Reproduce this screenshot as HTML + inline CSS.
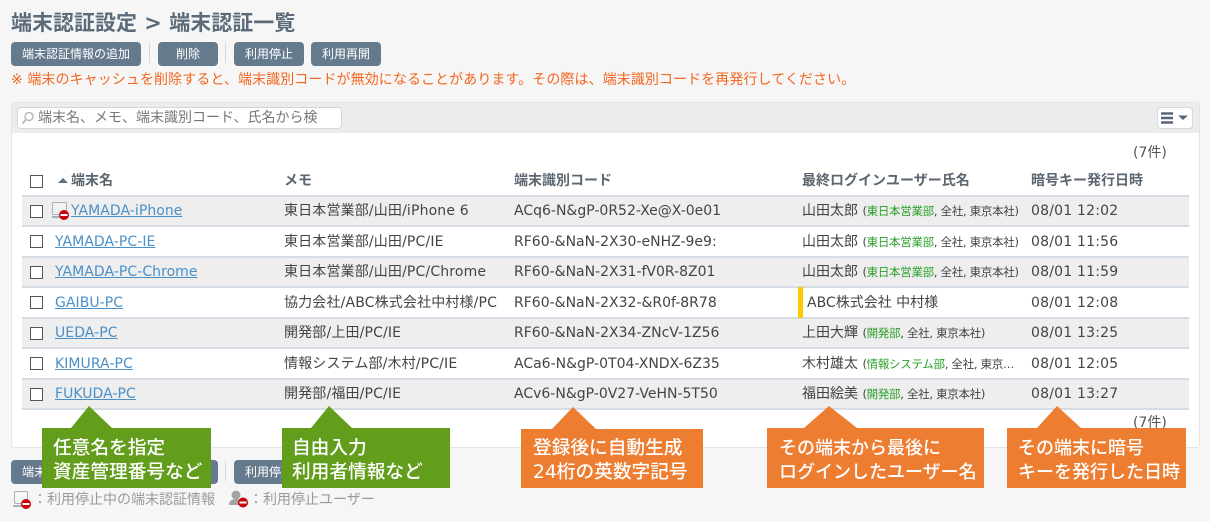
<!DOCTYPE html>
<html lang="ja"><head><meta charset="utf-8">
<style>
html,body{margin:0;padding:0}
body{width:1210px;height:522px;position:relative;overflow:hidden;background:#f6f6f6;font-family:"DejaVu Sans","Noto Sans CJK JP",sans-serif;color:#444}
.a{position:absolute;white-space:nowrap}
.btn{position:absolute;height:24px;top:42px;background:#667a8e;color:#fff;border-radius:4px;font-size:12px;line-height:24px;text-align:center;white-space:nowrap;overflow:hidden}
.sep{position:absolute;width:1px;height:20px;background:#d3d6d9}
.row{position:absolute;left:22px;width:1167px;height:28px}
.g{background:#eeeeee}
.line{position:absolute;left:22px;width:1167px;height:2px;background:#d5dce3}
.cb{position:absolute;left:30px;width:11px;height:11px;border:1px solid #555;background:#fff}
.t{position:absolute;font-size:14px;white-space:nowrap;line-height:20px;color:#444}
.l{color:#4a90c8;text-decoration:underline;letter-spacing:.05px}
.c{letter-spacing:0}
.d{letter-spacing:.2px}
.m{letter-spacing:.15px}
.th{position:absolute;top:171px;font-size:14px;font-weight:bold;color:#5b6670;white-space:nowrap;line-height:20px}
.s{font-size:11.500px;letter-spacing:-.3px}
.s b{font-weight:normal;color:#2aa02a}
.box{position:absolute;color:#fff;font-size:18px;line-height:24px;font-weight:500;white-space:nowrap}
.big{font-size:18.700px}
.green{background:#629d1c}.orange{background:#ed7d31}
svg{position:absolute;overflow:visible}
</style></head><body>

<div class="a" style="left:11px;top:10px;font-size:21px;line-height:26px;font-weight:bold;color:#5c6b79">端末認証設定 &gt; 端末認証一覧</div>

<div class="btn" style="left:11px;width:130px">端末認証情報の追加</div>
<div class="sep" style="left:149px;top:43px"></div>
<div class="btn" style="left:158px;width:60px">削除</div>
<div class="sep" style="left:225px;top:43px"></div>
<div class="btn" style="left:234px;width:70px">利用停止</div>
<div class="btn" style="left:311px;width:70px">利用再開</div>

<div class="a" style="left:11px;top:70px;font-size:14px;line-height:20px;color:#f4651f;letter-spacing:.08px">※ 端末のキャッシュを削除すると、端末識別コードが無効になることがあります。その際は、端末識別コードを再発行してください。</div>

<!-- panel -->
<div class="a" style="left:11px;top:102px;width:1187px;height:344px;background:#fff;border:1px solid #e2e4e6;border-radius:3px"></div>
<div class="a" style="left:12px;top:103px;width:1187px;height:30px;background:#ececec"></div>
<div class="a" style="left:17px;top:107px;width:323px;height:20px;background:#fff;border:1px solid #d3d6d9;border-radius:4px"></div>
<svg style="left:21px;top:111px" width="14" height="14" viewBox="0 0 14 14"><circle cx="8" cy="5.500" r="4" fill="none" stroke="#bbb" stroke-width="1.500"/><path d="M5 8.500 L1.500 12.500" stroke="#bbb" stroke-width="2"/></svg>
<div class="a" style="left:38px;top:108px;font-size:14px;line-height:20px;color:#777">端末名、メモ、端末識別コード、氏名から検</div>
<div class="a" style="left:1157px;top:107px;width:34px;height:20px;background:#fff;border:1px solid #d3d9e0;border-radius:4px"></div>
<svg style="left:1161px;top:112px" width="28" height="12" viewBox="0 0 28 12"><path d="M0 1.500H12M0 6H12M0 10.500H12" stroke="#56677a" stroke-width="2.400"/><path d="M17 3.500H27L22 8Z" fill="#56677a"/></svg>

<div class="t" style="left:1133px;top:143px;color:#555">(7件)</div>

<!-- header -->
<div class="cb" style="top:175px"></div>
<svg style="left:58px;top:178px" width="10" height="6"><path d="M0 5L5 0L10 5Z" fill="#5f7080"/></svg>
<div class="th" style="left:71px">端末名</div>
<div class="th" style="left:284px">メモ</div>
<div class="th" style="left:514px">端末識別コード</div>
<div class="th" style="left:802px">最終ログインユーザー氏名</div>
<div class="th" style="left:1031px">暗号キー発行日時</div>

<!-- rows -->
<div class="row g" style="top:197px;height:29px"></div>
<div class="row g" style="top:258px;height:29px"></div>
<div class="row g" style="top:319px;height:29px"></div>
<div class="row g" style="top:380px;height:28px"></div>
<div class="line" style="top:195px"></div>
<div class="line" style="top:225px"></div>
<div class="line" style="top:256px"></div>
<div class="line" style="top:286px"></div>
<div class="line" style="top:317px"></div>
<div class="line" style="top:347px"></div>
<div class="line" style="top:378px"></div>
<div class="line" style="top:408px"></div>

<div class="cb" style="top:205px"></div>
<div class="cb" style="top:235px"></div>
<div class="cb" style="top:266px"></div>
<div class="cb" style="top:296px"></div>
<div class="cb" style="top:327px"></div>
<div class="cb" style="top:357px"></div>
<div class="cb" style="top:388px"></div>

<svg style="left:51px;top:202px" width="20" height="18" viewBox="0 0 20 18"><rect x="1.500" y="0.500" width="14" height="12" rx="1" fill="#f2f2f2" stroke="#a9b0b6"/><path d="M1 14H14V16H1Z" fill="#a9b0b6"/><circle cx="13" cy="13" r="5" fill="#c8000a"/><rect x="9.500" y="12" width="7" height="2" fill="#fff"/></svg>

<div class="t l" style="left:71px;top:201px">YAMADA-iPhone</div>
<div class="t l" style="left:55px;top:232px">YAMADA-PC-IE</div>
<div class="t l" style="left:55px;top:262px">YAMADA-PC-Chrome</div>
<div class="t l" style="left:55px;top:293px">GAIBU-PC</div>
<div class="t l" style="left:55px;top:323px">UEDA-PC</div>
<div class="t l" style="left:55px;top:354px">KIMURA-PC</div>
<div class="t l" style="left:55px;top:384px">FUKUDA-PC</div>

<div class="t m" style="left:284px;top:201px">東日本営業部/山田/iPhone 6</div>
<div class="t m" style="left:284px;top:232px">東日本営業部/山田/PC/IE</div>
<div class="t m" style="left:284px;top:262px">東日本営業部/山田/PC/Chrome</div>
<div class="t m" style="left:284px;top:293px">協力会社/ABC株式会社中村様/PC</div>
<div class="t m" style="left:284px;top:323px">開発部/上田/PC/IE</div>
<div class="t m" style="left:284px;top:354px">情報システム部/木村/PC/IE</div>
<div class="t m" style="left:284px;top:384px">開発部/福田/PC/IE</div>

<div class="t c" style="left:514px;top:201px">ACq6-N&amp;gP-0R52-Xe@X-0e01</div>
<div class="t c" style="left:514px;top:232px">RF60-&amp;NaN-2X30-eNHZ-9e9:</div>
<div class="t c" style="left:514px;top:262px">RF60-&amp;NaN-2X31-fV0R-8Z01</div>
<div class="t c" style="left:514px;top:293px">RF60-&amp;NaN-2X32-&amp;R0f-8R78</div>
<div class="t c" style="left:514px;top:323px">RF60-&amp;NaN-2X34-ZNcV-1Z56</div>
<div class="t c" style="left:514px;top:354px">ACa6-N&amp;gP-0T04-XNDX-6Z35</div>
<div class="t c" style="left:514px;top:384px">ACv6-N&amp;gP-0V27-VeHN-5T50</div>

<div class="t" style="left:802px;top:201px">山田太郎 <span class="s">(<b>東日本営業部</b>, 全社, 東京本社)</span></div>
<div class="t" style="left:802px;top:232px">山田太郎 <span class="s">(<b>東日本営業部</b>, 全社, 東京本社)</span></div>
<div class="t" style="left:802px;top:262px">山田太郎 <span class="s">(<b>東日本営業部</b>, 全社, 東京本社)</span></div>
<div class="a" style="left:798px;top:287px;width:5px;height:31px;background:#fdc800"></div>
<div class="t" style="left:807px;top:293px">ABC株式会社 中村様</div>
<div class="t" style="left:802px;top:323px">上田大輝 <span class="s">(<b>開発部</b>, 全社, 東京本社)</span></div>
<div class="t" style="left:802px;top:354px">木村雄太 <span class="s">(<b>情報システム部</b>, 全社, 東京…</span></div>
<div class="t" style="left:802px;top:384px">福田絵美 <span class="s">(<b>開発部</b>, 全社, 東京本社)</span></div>

<div class="t d" style="left:1031px;top:201px">08/01 12:02</div>
<div class="t d" style="left:1031px;top:232px">08/01 11:56</div>
<div class="t d" style="left:1031px;top:262px">08/01 11:59</div>
<div class="t d" style="left:1031px;top:293px">08/01 12:08</div>
<div class="t d" style="left:1031px;top:323px">08/01 13:25</div>
<div class="t d" style="left:1031px;top:354px">08/01 12:05</div>
<div class="t d" style="left:1031px;top:384px">08/01 13:27</div>

<div class="t" style="left:1133px;top:413px;color:#555">(7件)</div>

<!-- bottom buttons -->
<div class="btn" style="left:11px;width:130px;top:460px;height:24px">端末認証情報の追加</div>
<div class="btn" style="left:158px;width:60px;top:460px;height:24px">削除</div>
<div class="sep" style="left:225px;top:461px"></div>
<div class="btn" style="left:234px;width:70px;top:460px;height:24px">利用停止</div>

<!-- legend -->
<svg style="left:13px;top:491px" width="20" height="18" viewBox="0 0 20 18"><rect x="1.500" y="0.500" width="13" height="12" rx="1" fill="#f6f6f6" stroke="#a9b0b6"/><path d="M0 14H14V16H0Z" fill="#a9b0b6"/><circle cx="13" cy="13" r="5" fill="#c8000a"/><rect x="9.500" y="12" width="7" height="2" fill="#fff"/></svg>
<div class="a" style="left:33px;top:490px;font-size:14px;line-height:20px;color:#999">：利用停止中の端末認証情報</div>
<svg style="left:228px;top:490px" width="22" height="18" viewBox="0 0 22 18"><circle cx="8" cy="5" r="4.500" fill="#a3a3a3"/><path d="M1 15C1 10 5 9 8 9C11 9 15 10 15 15Z" fill="#a3a3a3"/><circle cx="15" cy="12.500" r="5" fill="#c8000a"/><rect x="11.500" y="11.500" width="7" height="2" fill="#fff"/></svg>
<div class="a" style="left:249px;top:490px;font-size:14px;line-height:20px;color:#999">：利用停止ユーザー</div>

<!-- callouts -->
<svg style="left:0;top:0" width="1210" height="522"><path d="M71 428L89 406L112 428Z" fill="#629d1c"/><path d="M311 428L329 406L352 428Z" fill="#629d1c"/><path d="M552 429L573 407L596 429Z" fill="#ed7d31"/><path d="M804 428L829 406L857 428Z" fill="#ed7d31"/><path d="M1037 428L1057 406L1081 428Z" fill="#ed7d31"/></svg>
<div class="box green big" style="left:42px;top:428px;width:169px;height:60px"><div style="position:absolute;left:11px;top:9px">任意名を指定<br>資産管理番号など</div></div>
<div class="box green big" style="left:282px;top:428px;width:168px;height:60px"><div style="position:absolute;left:10px;top:9px">自由入力<br>利用者情報など</div></div>
<div class="box orange big" style="left:521px;top:429px;width:182px;height:59px"><div style="position:absolute;left:12px;top:8px">登録後に自動生成<br>24桁の英数字記号</div></div>
<div class="box orange" style="left:767px;top:428px;width:217px;height:60px"><div style="position:absolute;left:12px;top:9px">その端末から最後に<br>ログインしたユーザー名</div></div>
<div class="box orange" style="left:1007px;top:428px;width:179px;height:60px"><div style="position:absolute;left:11px;top:9px">その端末に暗号<br>キーを発行した日時</div></div>

</body></html>
